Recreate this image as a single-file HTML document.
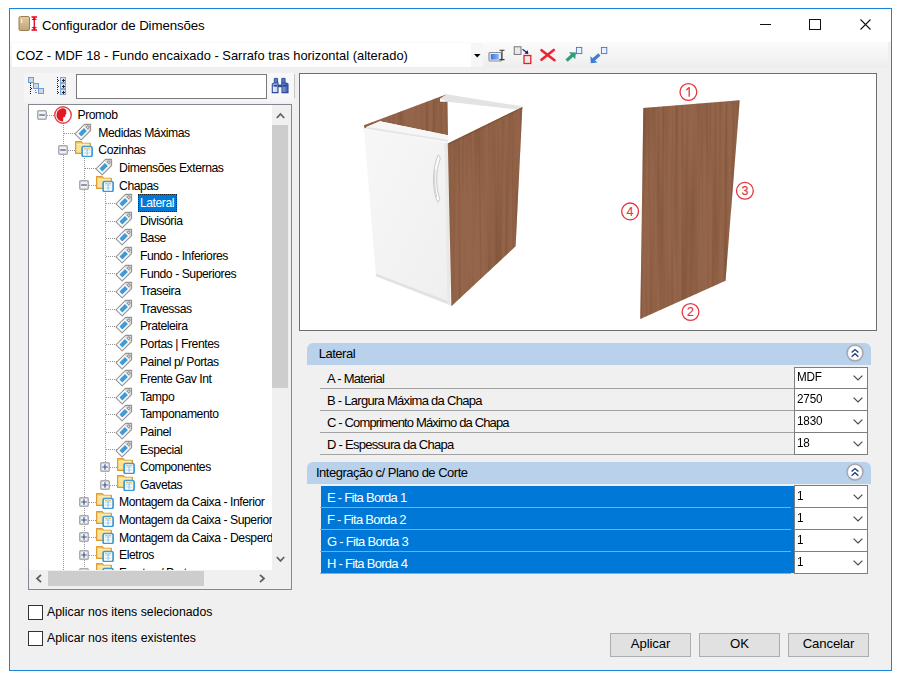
<!DOCTYPE html>
<html><head><meta charset="utf-8"><style>
*{margin:0;padding:0;box-sizing:border-box}
html,body{width:901px;height:676px;overflow:hidden;background:#fff;font-family:"Liberation Sans",sans-serif;color:#000}
.a{position:absolute}
.t{position:absolute;white-space:pre;line-height:1}
.tr{font-size:12.2px;letter-spacing:-0.45px;color:#000}
.pg{font-size:13px;letter-spacing:-0.72px;color:#000}
.hd{font-size:13px;letter-spacing:-0.5px;color:#000}
.ck{font-size:12.3px;letter-spacing:0px;color:#000}
.bt{font-size:13.2px;letter-spacing:-0.15px;color:#000}
svg{position:absolute;overflow:visible}
</style></head><body>
<div class="a" style="left:9px;top:8px;width:883px;height:663px;border:1px solid #1883D7;background:#F0F0F0"></div>
<div class="a" style="left:10px;top:9px;width:881px;height:33px;background:#fff"></div>
<div class="a" style="left:10px;top:42px;width:878px;height:26px;background:linear-gradient(#FBFBFB,#F6F6F6 40%,#EEEEEE)"></div>
<svg style="left:18px;top:15px" width="22" height="17" viewBox="0 0 22 17">
<defs><linearGradient id="gd" x1="0" y1="0" x2="0" y2="1"><stop offset="0" stop-color="#E2CBA2"/><stop offset="1" stop-color="#C2A37A"/></linearGradient></defs>
<rect x="1" y="1.5" width="10.5" height="14" rx="1.5" fill="url(#gd)" stroke="#9C7E55" stroke-width="1"/>
<rect x="3" y="4" width="1.2" height="4" fill="#F4F1EC"/>
<path d="M13.5 2H19M13.5 15H19M16.25 2V15" stroke="#E3001B" stroke-width="1.3"/>
<path d="M13.5 5L16.25 2.6L19 5ZM13.5 12L16.25 14.4L19 12Z" fill="#E3001B"/>
</svg>
<div class="t" style="left:42px;top:18.5px;font-size:13.3px;letter-spacing:-0.12px;color:#000">Configurador de Dimensões</div>
<div class="a" style="left:760px;top:24px;width:11px;height:1px;background:#111"></div>
<div class="a" style="left:809px;top:19px;width:12px;height:11px;border:1px solid #111"></div>
<svg style="left:860px;top:19px" width="11" height="11"><path d="M0.5 0.5L10.5 10.5M10.5 0.5L0.5 10.5" stroke="#111" stroke-width="1.1"/></svg>
<div class="a" style="left:12px;top:43px;width:459px;height:24px;background:#fff"></div>
<div class="a" style="left:471px;top:43px;width:12px;height:24px;background:#F6F6F6"></div>
<div class="t" style="left:16px;top:50px;font-size:12.9px;color:#000">COZ - MDF 18 - Fundo encaixado - Sarrafo tras horizontal (alterado)</div>
<svg style="left:474px;top:54px" width="7" height="4"><path d="M0 0H6.5L3.25 3.5Z" fill="#000"/></svg>
<svg style="left:484px;top:44px" width="130" height="24" viewBox="484 44 130 24">
<defs><linearGradient id="tb1" x1="0" y1="0" x2="1" y2="0"><stop offset="0" stop-color="#3B74E8"/><stop offset="1" stop-color="#8FB4F4"/></linearGradient></defs>
<rect x="489" y="52.5" width="12.5" height="8.5" rx="1" fill="#E9ECF2" stroke="#8A8F99" stroke-width="1.2"/>
<rect x="490.8" y="54" width="8" height="5.6" fill="url(#tb1)"/>
<path d="M499.5 50.2H504.5M499.5 59.6H504.5M502 50.2V59.6" stroke="#3A3A3A" stroke-width="1.1"/>
<rect x="514.2" y="46.8" width="6.8" height="7.6" fill="#E8E8E8" stroke="#6E6670" stroke-width="0.9"/>
<path d="M522.5 49.2L526.5 52.2" stroke="#1E2C8C" stroke-width="1.3"/><path d="M524.3 53.6L528.3 54L527.8 50.2Z" fill="#0F1E7A"/>
<rect x="524" y="55.5" width="6.8" height="8" fill="#E6ECEE" stroke="#F01C1C" stroke-width="1.3"/>
<path d="M541.5 50.2L554.5 60.2M553.8 50L541.5 59.8" stroke="#EE2530" stroke-width="2.6" stroke-linecap="round"/>
<rect x="576.4" y="47.4" width="5.4" height="6.2" fill="#EAF2FF" stroke="#4C6FC2" stroke-width="0.9"/>
<path d="M566.6 60.6L572.6 55" stroke="#2F9E78" stroke-width="3.2"/><path d="M569 52.2L576 52.6L575.2 59.2Z" fill="#2F9E78"/>
<rect x="601.4" y="47.4" width="5.4" height="6.2" fill="#EAF2FF" stroke="#4C6FC2" stroke-width="0.9"/>
<path d="M599.4 54.6L593.6 59.4" stroke="#3C7DD3" stroke-width="3.2"/><path d="M590.4 56.2L590.8 63.2L597.4 62.6Z" fill="#3C7DD3"/>
</svg>
<div class="a" style="left:24px;top:73px;width:270px;height:29px;background:#F5F5F5"></div>
<div class="a" style="left:294px;top:74px;width:1px;height:24px;background:#C8C8C8"></div>
<svg style="left:27px;top:77px" width="18" height="18" viewBox="0 0 18 18" shape-rendering="crispEdges">
<path d="M3.5 6V18" stroke="#111" stroke-dasharray="1 1"/>
<path d="M4 11.5H6" stroke="#111" stroke-dasharray="1 1"/>
<path d="M8.5 11V17" stroke="#888" stroke-dasharray="1 1"/>
<path d="M9 15.5H11" stroke="#888" stroke-dasharray="1 1"/>
<rect x="1.5" y="0.5" width="5" height="5" fill="#D6D6D6" stroke="#6C9DD6"/>
<rect x="6.5" y="6.5" width="5" height="5" fill="#D6D6D6" stroke="#6C9DD6"/>
<rect x="11.5" y="11.5" width="5" height="5" fill="#D6D6D6" stroke="#6C9DD6"/>
</svg>
<svg style="left:56px;top:77px" width="11" height="18" viewBox="0 0 11 18" shape-rendering="crispEdges">
<path d="M1.5 0V18" stroke="#222" stroke-dasharray="1 1"/>
<path d="M2 3.5H4M2 9.5H4M2 15.5H4" stroke="#222" stroke-dasharray="1 1"/>
<rect x="4.5" y="0.5" width="5" height="5" fill="#E0E0E0" stroke="#7DA7DA"/>
<rect x="4.5" y="6.5" width="5" height="5" fill="#E0E0E0" stroke="#7DA7DA"/>
<rect x="4.5" y="12.5" width="5" height="5" fill="#E0E0E0" stroke="#7DA7DA"/>
<path d="M7 1.5V5M5.5 3.5H9M7 7.5V11M5.5 9.5H9M7 13.5V17M5.5 15.5H9" stroke="#222"/>
</svg>
<div class="a" style="left:76px;top:74px;width:191px;height:25px;background:#fff;border:1px solid #7A7A7A"></div>
<div class="a" style="left:268px;top:73px;width:26px;height:25px;background:#F8F8F8"></div>
<svg style="left:270px;top:76px" width="20" height="19" viewBox="270 76 20 19">
<defs><linearGradient id="bn" x1="0" y1="0" x2="1" y2="0"><stop offset="0" stop-color="#F2F6FF"/><stop offset="0.5" stop-color="#A9BCE6"/><stop offset="1" stop-color="#3A5BB0"/></linearGradient></defs>
<path d="M274.3 78.4H277.6V83.4H274.3Z M281.8 78.4H285.1V83.4H281.8Z" fill="#5A78C4" stroke="#2A4896" stroke-width="0.9"/>
<path d="M272.3 84L274 83H278V92.6H272.3Z M282 83H286.3L288 84V92.6H282Z" fill="url(#bn)" stroke="#2A4896" stroke-width="1.1"/>
<rect x="277.8" y="84.6" width="4.4" height="2.6" fill="#2A4896"/>
<rect x="273.4" y="84.6" width="3.6" height="2" fill="#2A4896"/><rect x="283" y="84.6" width="3.6" height="2" fill="#2A4896"/>
</svg>
<div class="a" style="left:28px;top:104px;width:264px;height:486px;background:#fff;border:1px solid #828790"></div>
<svg width="0" height="0" style="left:0;top:0"><defs>
<symbol id="tag" viewBox="0 0 16 16" style="overflow:visible">
<g transform="rotate(-45 8 8)">
<path d="M-1.8 3.7H11.6L15.9 8L11.6 12.3H-1.8Z" fill="#fff" stroke="#949494" stroke-width="1.1" stroke-linejoin="round"/>
<path d="M9.8 4.3H11.4L15.1 8L11.4 11.7H9.8Z" fill="#D6D6D6"/>
<rect x="0.8" y="5.9" width="7.8" height="4.2" fill="#3D9BDA"/>
<circle cx="12" cy="8" r="1.3" fill="#EEE" stroke="#707070" stroke-width="0.8"/>
</g></symbol>
<symbol id="folder" viewBox="0 0 18 18">
<path d="M0.6 2.6H6.2L7.6 4.2H15.4V14.4H0.6Z" fill="#F6CD5E" stroke="#DC9A30" stroke-width="1.1" stroke-linejoin="round"/>
<path d="M1.6 5.2H14.4V13.4H1.6Z" fill="#FBE49A"/>
<path d="M1.6 5.2H14.4" stroke="#FFF6D0" stroke-width="0.8"/>
<rect x="7.1" y="7.5" width="10" height="10" rx="1.6" fill="#fff" stroke="#3D9AD6" stroke-width="1.7"/>
<path d="M8.6 11.2H15.6M8.6 14H15.6" stroke="#A8D2EE" stroke-width="0.8"/>
<path d="M12.1 9V16.2" stroke="#7DB8E2" stroke-width="0.9"/>
<rect x="9" y="9" width="2.4" height="1.2" fill="#F0C050"/><rect x="12.8" y="9" width="2.4" height="1.2" fill="#F0C050"/>
</symbol>
<symbol id="minus" viewBox="0 0 10 10">
<rect x="0.75" y="0.75" width="8.5" height="8.5" rx="1" fill="#F2F2F2" stroke="#ABABAB" stroke-width="1.5"/>
<path d="M2.2 5H7.8" stroke="#3A55A5" stroke-width="1.2"/>
</symbol>
<symbol id="plus" viewBox="0 0 10 10">
<rect x="0.75" y="0.75" width="8.5" height="8.5" rx="1" fill="#F2F2F2" stroke="#ABABAB" stroke-width="1.5"/>
<path d="M2.2 5H7.8M5 2.2V7.8" stroke="#3A55A5" stroke-width="1.2"/>
</symbol>
<symbol id="promob" viewBox="0 0 18 18">
<circle cx="9" cy="9" r="8.25" fill="#fff" stroke="#E4434A" stroke-width="1.4"/>
<path d="M9.2 15.6A6.6 6.6 0 0 1 7.4 2.6C9 2.1 10.8 2.4 11.8 3.8C12.4 4.6 12.2 5.4 12.2 6.2C12.3 6.9 12.7 7.4 12.2 7.9L11.5 8.5C11.7 8.9 11.6 9.4 11.2 9.7C11.4 10.2 11 10.8 10.3 10.9L9.3 11.3C9.1 12.5 9.3 14.2 9.2 15.6Z" fill="#DE1A23"/>
</symbol>
</defs></svg>
<div class="a" style="left:29px;top:105px;width:243px;height:464.5px;overflow:hidden"><svg style="left:0;top:0" width="243" height="465"><path d="M34.5 18.0V495.0" stroke="#959595" stroke-width="1" stroke-dasharray="1 1" shape-rendering="crispEdges"/><path d="M55.5 53.2V495.0" stroke="#959595" stroke-width="1" stroke-dasharray="1 1" shape-rendering="crispEdges"/><path d="M76.5 88.4V379.6" stroke="#959595" stroke-width="1" stroke-dasharray="1 1" shape-rendering="crispEdges"/><path d="M18.0 10.5H26.0" stroke="#959595" stroke-width="1" stroke-dasharray="1 1" shape-rendering="crispEdges"/><path d="M34.5 28.5H47.9" stroke="#959595" stroke-width="1" stroke-dasharray="1 1" shape-rendering="crispEdges"/><path d="M34.5 45.5H47.9" stroke="#959595" stroke-width="1" stroke-dasharray="1 1" shape-rendering="crispEdges"/><path d="M55.5 63.5H68.7" stroke="#959595" stroke-width="1" stroke-dasharray="1 1" shape-rendering="crispEdges"/><path d="M55.5 80.5H68.7" stroke="#959595" stroke-width="1" stroke-dasharray="1 1" shape-rendering="crispEdges"/><path d="M76.5 98.5H89.5" stroke="#959595" stroke-width="1" stroke-dasharray="1 1" shape-rendering="crispEdges"/><path d="M76.5 116.5H89.5" stroke="#959595" stroke-width="1" stroke-dasharray="1 1" shape-rendering="crispEdges"/><path d="M76.5 133.5H89.5" stroke="#959595" stroke-width="1" stroke-dasharray="1 1" shape-rendering="crispEdges"/><path d="M76.5 151.5H89.5" stroke="#959595" stroke-width="1" stroke-dasharray="1 1" shape-rendering="crispEdges"/><path d="M76.5 168.5H89.5" stroke="#959595" stroke-width="1" stroke-dasharray="1 1" shape-rendering="crispEdges"/><path d="M76.5 186.5H89.5" stroke="#959595" stroke-width="1" stroke-dasharray="1 1" shape-rendering="crispEdges"/><path d="M76.5 204.5H89.5" stroke="#959595" stroke-width="1" stroke-dasharray="1 1" shape-rendering="crispEdges"/><path d="M76.5 221.5H89.5" stroke="#959595" stroke-width="1" stroke-dasharray="1 1" shape-rendering="crispEdges"/><path d="M76.5 239.5H89.5" stroke="#959595" stroke-width="1" stroke-dasharray="1 1" shape-rendering="crispEdges"/><path d="M76.5 256.5H89.5" stroke="#959595" stroke-width="1" stroke-dasharray="1 1" shape-rendering="crispEdges"/><path d="M76.5 274.5H89.5" stroke="#959595" stroke-width="1" stroke-dasharray="1 1" shape-rendering="crispEdges"/><path d="M76.5 292.5H89.5" stroke="#959595" stroke-width="1" stroke-dasharray="1 1" shape-rendering="crispEdges"/><path d="M76.5 309.5H89.5" stroke="#959595" stroke-width="1" stroke-dasharray="1 1" shape-rendering="crispEdges"/><path d="M76.5 327.5H89.5" stroke="#959595" stroke-width="1" stroke-dasharray="1 1" shape-rendering="crispEdges"/><path d="M76.5 344.5H89.5" stroke="#959595" stroke-width="1" stroke-dasharray="1 1" shape-rendering="crispEdges"/><path d="M76.5 362.5H89.5" stroke="#959595" stroke-width="1" stroke-dasharray="1 1" shape-rendering="crispEdges"/><path d="M76.5 380.5H89.5" stroke="#959595" stroke-width="1" stroke-dasharray="1 1" shape-rendering="crispEdges"/><path d="M55.5 397.5H68.7" stroke="#959595" stroke-width="1" stroke-dasharray="1 1" shape-rendering="crispEdges"/><path d="M55.5 415.5H68.7" stroke="#959595" stroke-width="1" stroke-dasharray="1 1" shape-rendering="crispEdges"/><path d="M55.5 432.5H68.7" stroke="#959595" stroke-width="1" stroke-dasharray="1 1" shape-rendering="crispEdges"/><path d="M55.5 450.5H68.7" stroke="#959595" stroke-width="1" stroke-dasharray="1 1" shape-rendering="crispEdges"/><path d="M55.5 468.5H68.7" stroke="#959595" stroke-width="1" stroke-dasharray="1 1" shape-rendering="crispEdges"/></svg><svg style="left:8.3px;top:5.0px" width="10" height="10"><use href="#minus"/></svg><svg style="left:25.1px;top:1.0px" width="18" height="18"><use href="#promob"/></svg><div class="t tr" style="left:48.5px;top:4.1px">Promob</div><svg style="left:47.7px;top:16.8px" width="16" height="16"><use href="#tag"/></svg><div class="t tr" style="left:69.3px;top:21.7px">Medidas Máximas</div><svg style="left:29.1px;top:40.2px" width="10" height="10"><use href="#minus"/></svg><svg style="left:45.9px;top:33.9px" width="18" height="18"><use href="#folder"/></svg><div class="t tr" style="left:69.3px;top:39.3px">Cozinhas</div><svg style="left:68.5px;top:52.0px" width="16" height="16"><use href="#tag"/></svg><div class="t tr" style="left:90.1px;top:56.9px">Dimensões Externas</div><svg style="left:49.9px;top:75.4px" width="10" height="10"><use href="#minus"/></svg><svg style="left:66.7px;top:69.1px" width="18" height="18"><use href="#folder"/></svg><div class="t tr" style="left:90.1px;top:74.5px">Chapas</div><svg style="left:89.3px;top:87.2px" width="16" height="16"><use href="#tag"/></svg><div class="a" style="left:108.5px;top:89px;width:39px;height:17.5px;background:#0078D7;outline:1px dotted #222;outline-offset:-1px"></div><div class="t tr" style="left:110.9px;top:92.1px;color:#fff">Lateral</div><svg style="left:89.3px;top:104.8px" width="16" height="16"><use href="#tag"/></svg><div class="t tr" style="left:110.9px;top:109.7px">Divisória</div><svg style="left:89.3px;top:122.4px" width="16" height="16"><use href="#tag"/></svg><div class="t tr" style="left:110.9px;top:127.3px">Base</div><svg style="left:89.3px;top:140.0px" width="16" height="16"><use href="#tag"/></svg><div class="t tr" style="left:110.9px;top:144.9px">Fundo - Inferiores</div><svg style="left:89.3px;top:157.6px" width="16" height="16"><use href="#tag"/></svg><div class="t tr" style="left:110.9px;top:162.5px">Fundo - Superiores</div><svg style="left:89.3px;top:175.2px" width="16" height="16"><use href="#tag"/></svg><div class="t tr" style="left:110.9px;top:180.1px">Traseira</div><svg style="left:89.3px;top:192.8px" width="16" height="16"><use href="#tag"/></svg><div class="t tr" style="left:110.9px;top:197.7px">Travessas</div><svg style="left:89.3px;top:210.4px" width="16" height="16"><use href="#tag"/></svg><div class="t tr" style="left:110.9px;top:215.3px">Prateleira</div><svg style="left:89.3px;top:228.0px" width="16" height="16"><use href="#tag"/></svg><div class="t tr" style="left:110.9px;top:232.9px">Portas | Frentes</div><svg style="left:89.3px;top:245.6px" width="16" height="16"><use href="#tag"/></svg><div class="t tr" style="left:110.9px;top:250.5px">Painel p/ Portas</div><svg style="left:89.3px;top:263.2px" width="16" height="16"><use href="#tag"/></svg><div class="t tr" style="left:110.9px;top:268.1px">Frente Gav Int</div><svg style="left:89.3px;top:280.8px" width="16" height="16"><use href="#tag"/></svg><div class="t tr" style="left:110.9px;top:285.7px">Tampo</div><svg style="left:89.3px;top:298.4px" width="16" height="16"><use href="#tag"/></svg><div class="t tr" style="left:110.9px;top:303.3px">Tamponamento</div><svg style="left:89.3px;top:316.0px" width="16" height="16"><use href="#tag"/></svg><div class="t tr" style="left:110.9px;top:320.9px">Painel</div><svg style="left:89.3px;top:333.6px" width="16" height="16"><use href="#tag"/></svg><div class="t tr" style="left:110.9px;top:338.5px">Especial</div><svg style="left:70.7px;top:357.0px" width="10" height="10"><use href="#plus"/></svg><svg style="left:87.5px;top:350.7px" width="18" height="18"><use href="#folder"/></svg><div class="t tr" style="left:110.9px;top:356.1px">Componentes</div><svg style="left:70.7px;top:374.6px" width="10" height="10"><use href="#plus"/></svg><svg style="left:87.5px;top:368.3px" width="18" height="18"><use href="#folder"/></svg><div class="t tr" style="left:110.9px;top:373.7px">Gavetas</div><svg style="left:49.9px;top:392.2px" width="10" height="10"><use href="#plus"/></svg><svg style="left:66.7px;top:385.9px" width="18" height="18"><use href="#folder"/></svg><div class="t tr" style="left:90.1px;top:391.3px">Montagem da Caixa - Inferior</div><svg style="left:49.9px;top:409.8px" width="10" height="10"><use href="#plus"/></svg><svg style="left:66.7px;top:403.5px" width="18" height="18"><use href="#folder"/></svg><div class="t tr" style="left:90.1px;top:408.9px">Montagem da Caixa - Superior</div><svg style="left:49.9px;top:427.4px" width="10" height="10"><use href="#plus"/></svg><svg style="left:66.7px;top:421.1px" width="18" height="18"><use href="#folder"/></svg><div class="t tr" style="left:90.1px;top:426.5px">Montagem da Caixa - Desperdício</div><svg style="left:49.9px;top:445.0px" width="10" height="10"><use href="#plus"/></svg><svg style="left:66.7px;top:438.7px" width="18" height="18"><use href="#folder"/></svg><div class="t tr" style="left:90.1px;top:444.1px">Eletros</div><svg style="left:49.9px;top:462.6px" width="10" height="10"><use href="#plus"/></svg><svg style="left:66.7px;top:456.3px" width="18" height="18"><use href="#folder"/></svg><div class="t tr" style="left:90.1px;top:461.7px">Frentes / Portas</div></div>
<div class="a" style="left:272px;top:105px;width:19px;height:465px;background:#F0F0F0"></div>
<div class="a" style="left:272px;top:125px;width:16px;height:263px;background:#CDCDCD"></div>
<svg style="left:276px;top:112px" width="9" height="7"><path d="M0.8 6L4.5 2L8.2 6" stroke="#606060" stroke-width="1.8" fill="none"/></svg>
<svg style="left:276px;top:556px" width="9" height="7"><path d="M0.8 1L4.5 5L8.2 1" stroke="#606060" stroke-width="1.8" fill="none"/></svg>
<div class="a" style="left:29px;top:570px;width:262px;height:19px;background:#F0F0F0"></div>
<div class="a" style="left:48px;top:570.5px;width:155.5px;height:15.5px;background:#CDCDCD"></div>
<svg style="left:34.5px;top:573.5px" width="7" height="9"><path d="M6 0.8L2 4.5L6 8.2" stroke="#606060" stroke-width="1.8" fill="none"/></svg>
<svg style="left:259px;top:574px" width="7" height="9"><path d="M1 0.8L5 4.5L1 8.2" stroke="#606060" stroke-width="1.8" fill="none"/></svg>
<div class="a" style="left:299px;top:73px;width:578px;height:258px;background:#fff;border:1px solid #6E6E6E"></div>
<svg style="left:300px;top:74px" width="576" height="256" viewBox="300 74 576 256">
<defs>
<pattern id="wood" patternUnits="userSpaceOnUse" x="0" y="0" width="37" height="300">
<rect width="37" height="300" fill="#926247"/>
<rect x="1" width="1" height="300" fill="#8A5C41"/>
<rect x="4" width="2" height="300" fill="#97684C"/>
<rect x="8" width="1" height="300" fill="#8C5D42"/>
<rect x="11" width="3" height="300" fill="#98694D"/>
<rect x="16" width="1" height="300" fill="#895B40"/>
<rect x="19" width="2" height="300" fill="#96674B"/>
<rect x="23" width="1.5" height="300" fill="#8E5F44"/>
<rect x="27" width="3" height="300" fill="#996A4E"/>
<rect x="32" width="1" height="300" fill="#8B5C41"/>
<rect x="34" width="2" height="300" fill="#95664A"/>
</pattern>
<linearGradient id="door" x1="0" y1="0" x2="1" y2="1">
<stop offset="0" stop-color="#F7F7F7"/><stop offset="1" stop-color="#EFEFEF"/>
</linearGradient>
<filter id="grain" x="0%" y="0%" width="100%" height="100%" color-interpolation-filters="sRGB">
<feTurbulence type="fractalNoise" baseFrequency="0.28 0.006" numOctaves="2" seed="5" result="n"/>
<feColorMatrix in="n" type="matrix" values="0 0 0 0 0.45  0 0 0 0 0.28  0 0 0 0 0.17  0 0 0 1.1 -0.42" result="c"/>
<feComposite in="c" in2="SourceGraphic" operator="in"/>
</filter>
</defs>
<!-- back rail -->
<path d="M440 98.5L446.7 94.3L521.8 106.3L516.7 109.4L447.8 101.7Z" fill="#E3E3E3"/>
<!-- left panel -->
<path d="M364 125.2L446.7 94.2L440 98.5L440 101.8L447.5 101.8L448 135.2L380 121.3L368 126.3L364.5 128.8Z" fill="#94654A"/><path d="M364 125.2L446.7 94.2L440 98.5L440 101.8L447.5 101.8L448 135.2L380 121.3L368 126.3L364.5 128.8Z" fill="#000" filter="url(#grain)"/>
<!-- front rail -->
<path d="M364.5 128.8L368 126.3L380 121.3L448 135.2L448 143.5L364 129.5Z" fill="#F6F6F6"/>
<path d="M368 127L448 140L448 141.5L366 128.5Z" fill="#E4E4E4"/>
<!-- door -->
<path d="M364 129.5L448 143.5L450.5 305.3L376 276.3Z" fill="url(#door)"/>
<path d="M376 276.3L450.5 305.3L450.5 302L375.8 273.5Z" fill="#E2E2E2"/>
<path d="M444.5 142.9L448 143.5L450.5 305.3L447.5 304Z" fill="#E8E8E8"/>
<!-- handle -->
<path d="M438.2 155C432.6 166 431.6 190 437.6 202.2C439.6 201 440.4 198.6 439.2 196.8C435.6 186 436 169 439.6 161C440.8 158.6 440.2 156 438.2 155Z" fill="#FBFBFB" stroke="#BDBDBD" stroke-width="0.8"/>
<path d="M435 170C434.2 180 434.6 190 436.6 197" stroke="#D0D0D0" stroke-width="1" fill="none"/>
<!-- right side panel -->
<path d="M447.8 143.5L522.4 107L515.6 246.3L451.4 306.3Z" fill="#94654A"/><path d="M447.8 143.5L522.4 107L515.6 246.3L451.4 306.3Z" fill="#000" filter="url(#grain)"/>
<path d="M447.8 143.5L522.4 107L522.4 108.5L448 145Z" fill="#7F4C2C" opacity="0.6"/>
<!-- single panel -->
<path d="M643.3 107.9L739.7 100.3L725.5 280.8L640.3 319.1Z" fill="#94654A"/><path d="M643.3 107.9L739.7 100.3L725.5 280.8L640.3 319.1Z" fill="#000" filter="url(#grain)"/>
<g fill="none" stroke="#E5343C" stroke-width="1.3">
<circle cx="688.4" cy="92" r="8.4"/>
<circle cx="744.9" cy="190.8" r="8.4"/>
<circle cx="690.5" cy="312" r="8.4"/>
<circle cx="630.1" cy="211.4" r="8.4"/>
</g>
<g fill="#E5343C" style="font-family:'Liberation Sans',sans-serif" font-size="12.5" stroke="#E5343C" stroke-width="0.15" text-anchor="middle">
<text x="744.9" y="195.1">3</text>
<text x="690.5" y="316.3">2</text>
<text x="630.1" y="215.7">4</text>
</g>
<path d="M689.2 96.8V87.6L686.2 90" stroke="#E5343C" stroke-width="1.3" fill="none" stroke-linejoin="round"/>
</svg>

<div class="a" style="left:307px;top:342.8px;width:564px;height:22px;background:#B9D1EA;border-radius:6px 6px 0 0"></div>
<div class="t hd" style="left:318.8px;top:347.1px">Lateral</div>
<svg style="left:846.3px;top:344.4px" width="18" height="18" viewBox="0 0 18 18">
<circle cx="9" cy="9" r="7.9" fill="#fff" stroke="#A2A6AE" stroke-width="1.6"/>
<circle cx="9" cy="9" r="6.9" fill="none" stroke="#E6E8EC" stroke-width="0.6"/>
<path d="M5.6 8.6L9 5.6L12.4 8.6M5.6 12.8L9 9.8L12.4 12.8" stroke="#203E7C" stroke-width="1.4" fill="none"/>
</svg>
<div class="a" style="left:307px;top:461.6px;width:564px;height:22px;background:#B9D1EA;border-radius:6px 6px 0 0"></div>
<div class="t hd" style="left:316px;top:465.9px">Integração c/ Plano de Corte</div>
<svg style="left:846.3px;top:463.2px" width="18" height="18" viewBox="0 0 18 18">
<circle cx="9" cy="9" r="7.9" fill="#fff" stroke="#A2A6AE" stroke-width="1.6"/>
<circle cx="9" cy="9" r="6.9" fill="none" stroke="#E6E8EC" stroke-width="0.6"/>
<path d="M5.6 8.6L9 5.6L12.4 8.6M5.6 12.8L9 9.8L12.4 12.8" stroke="#203E7C" stroke-width="1.4" fill="none"/>
</svg>
<div class="t pg" style="left:327px;top:372.3px;color:#000">A - Material</div>
<div class="a" style="left:320px;top:388.2px;width:474px;height:1.3px;background:#A3A3A3"></div>
<div class="t pg" style="left:327px;top:394.4px;color:#000">B - Largura Máxima da Chapa</div>
<div class="a" style="left:320px;top:410.2px;width:474px;height:1.3px;background:#A3A3A3"></div>
<div class="t pg" style="left:327px;top:416.4px;color:#000;letter-spacing:-0.85px">C - Comprimento Máximo da Chapa</div>
<div class="a" style="left:320px;top:432.2px;width:474px;height:1.3px;background:#A3A3A3"></div>
<div class="t pg" style="left:327px;top:438.3px;color:#000">D - Espessura da Chapa</div>
<div class="a" style="left:320px;top:454.0px;width:474px;height:1.3px;background:#A3A3A3"></div>
<div class="a" style="left:794px;top:366.6px;width:74px;height:88.6px;background:#fff;border:1px solid #7E7E7E"></div>
<div class="t" style="left:797px;top:370.3px;font-size:13.6px;letter-spacing:-0.2px;transform:scaleX(0.86);transform-origin:0 0">MDF</div>
<svg style="left:853px;top:374.9px" width="10" height="6"><path d="M0.6 0.6L5 5L9.4 0.6" stroke="#4A4A4A" stroke-width="1.2" fill="none"/></svg>
<div class="a" style="left:794px;top:388.3px;width:74px;height:1.2px;background:#7E7E7E"></div>
<div class="t" style="left:797px;top:392.4px;font-size:13.6px;letter-spacing:-0.2px;transform:scaleX(0.86);transform-origin:0 0">2750</div>
<svg style="left:853px;top:397.0px" width="10" height="6"><path d="M0.6 0.6L5 5L9.4 0.6" stroke="#4A4A4A" stroke-width="1.2" fill="none"/></svg>
<div class="a" style="left:794px;top:410.3px;width:74px;height:1.2px;background:#7E7E7E"></div>
<div class="t" style="left:797px;top:414.4px;font-size:13.6px;letter-spacing:-0.2px;transform:scaleX(0.86);transform-origin:0 0">1830</div>
<svg style="left:853px;top:419.0px" width="10" height="6"><path d="M0.6 0.6L5 5L9.4 0.6" stroke="#4A4A4A" stroke-width="1.2" fill="none"/></svg>
<div class="a" style="left:794px;top:432.3px;width:74px;height:1.2px;background:#7E7E7E"></div>
<div class="t" style="left:797px;top:436.3px;font-size:13.6px;letter-spacing:-0.2px;transform:scaleX(0.86);transform-origin:0 0">18</div>
<svg style="left:853px;top:440.9px" width="10" height="6"><path d="M0.6 0.6L5 5L9.4 0.6" stroke="#4A4A4A" stroke-width="1.2" fill="none"/></svg>
<div class="a" style="left:321px;top:486.0px;width:473.5px;height:87.4px;background:#0078D7"></div>
<div class="t pg" style="left:327px;top:491.1px;color:#fff">E - Fita Borda 1</div>
<div class="a" style="left:320px;top:507.0px;width:471px;height:1.3px;background:#A3A3A3"></div>
<div class="t pg" style="left:327px;top:513.2px;color:#fff">F - Fita Borda 2</div>
<div class="a" style="left:320px;top:529.0px;width:471px;height:1.3px;background:#A3A3A3"></div>
<div class="t pg" style="left:327px;top:535.2px;color:#fff">G - Fita Borda 3</div>
<div class="a" style="left:320px;top:551.0px;width:471px;height:1.3px;background:#A3A3A3"></div>
<div class="t pg" style="left:327px;top:557.1px;color:#fff">H - Fita Borda 4</div>
<div class="a" style="left:320px;top:572.8px;width:471px;height:1.3px;background:#A3A3A3"></div>
<div class="a" style="left:794px;top:485.4px;width:74px;height:88.6px;background:#fff;border:1px solid #7E7E7E"></div>
<div class="t" style="left:797px;top:489.1px;font-size:13.6px;letter-spacing:-0.2px;transform:scaleX(0.86);transform-origin:0 0">1</div>
<svg style="left:853px;top:493.7px" width="10" height="6"><path d="M0.6 0.6L5 5L9.4 0.6" stroke="#4A4A4A" stroke-width="1.2" fill="none"/></svg>
<div class="a" style="left:794px;top:507.1px;width:74px;height:1.2px;background:#7E7E7E"></div>
<div class="t" style="left:797px;top:511.2px;font-size:13.6px;letter-spacing:-0.2px;transform:scaleX(0.86);transform-origin:0 0">1</div>
<svg style="left:853px;top:515.8px" width="10" height="6"><path d="M0.6 0.6L5 5L9.4 0.6" stroke="#4A4A4A" stroke-width="1.2" fill="none"/></svg>
<div class="a" style="left:794px;top:529.1px;width:74px;height:1.2px;background:#7E7E7E"></div>
<div class="t" style="left:797px;top:533.2px;font-size:13.6px;letter-spacing:-0.2px;transform:scaleX(0.86);transform-origin:0 0">1</div>
<svg style="left:853px;top:537.8px" width="10" height="6"><path d="M0.6 0.6L5 5L9.4 0.6" stroke="#4A4A4A" stroke-width="1.2" fill="none"/></svg>
<div class="a" style="left:794px;top:551.1px;width:74px;height:1.2px;background:#7E7E7E"></div>
<div class="t" style="left:797px;top:555.1px;font-size:13.6px;letter-spacing:-0.2px;transform:scaleX(0.86);transform-origin:0 0">1</div>
<svg style="left:853px;top:559.7px" width="10" height="6"><path d="M0.6 0.6L5 5L9.4 0.6" stroke="#4A4A4A" stroke-width="1.2" fill="none"/></svg>
<div class="a" style="left:27.5px;top:604.5px;width:15px;height:15px;background:#fff;border:1.3px solid #333"></div>
<div class="t ck" style="left:47px;top:605.5px">Aplicar nos itens selecionados</div>
<div class="a" style="left:27.5px;top:631px;width:15px;height:15px;background:#fff;border:1.3px solid #333"></div>
<div class="t ck" style="left:47px;top:632px">Aplicar nos itens existentes</div>
<div class="a" style="left:610px;top:633px;width:81px;height:24px;background:#E1E1E1;border:1px solid #ADADAD"></div>
<div class="t bt" style="left:610px;top:637px;width:81px;text-align:center">Aplicar</div>
<div class="a" style="left:699px;top:633px;width:81px;height:24px;background:#E1E1E1;border:1px solid #ADADAD"></div>
<div class="t bt" style="left:699px;top:637px;width:81px;text-align:center">OK</div>
<div class="a" style="left:788px;top:633px;width:81px;height:24px;background:#E1E1E1;border:1px solid #ADADAD"></div>
<div class="t bt" style="left:788px;top:637px;width:81px;text-align:center">Cancelar</div>
</body></html>
